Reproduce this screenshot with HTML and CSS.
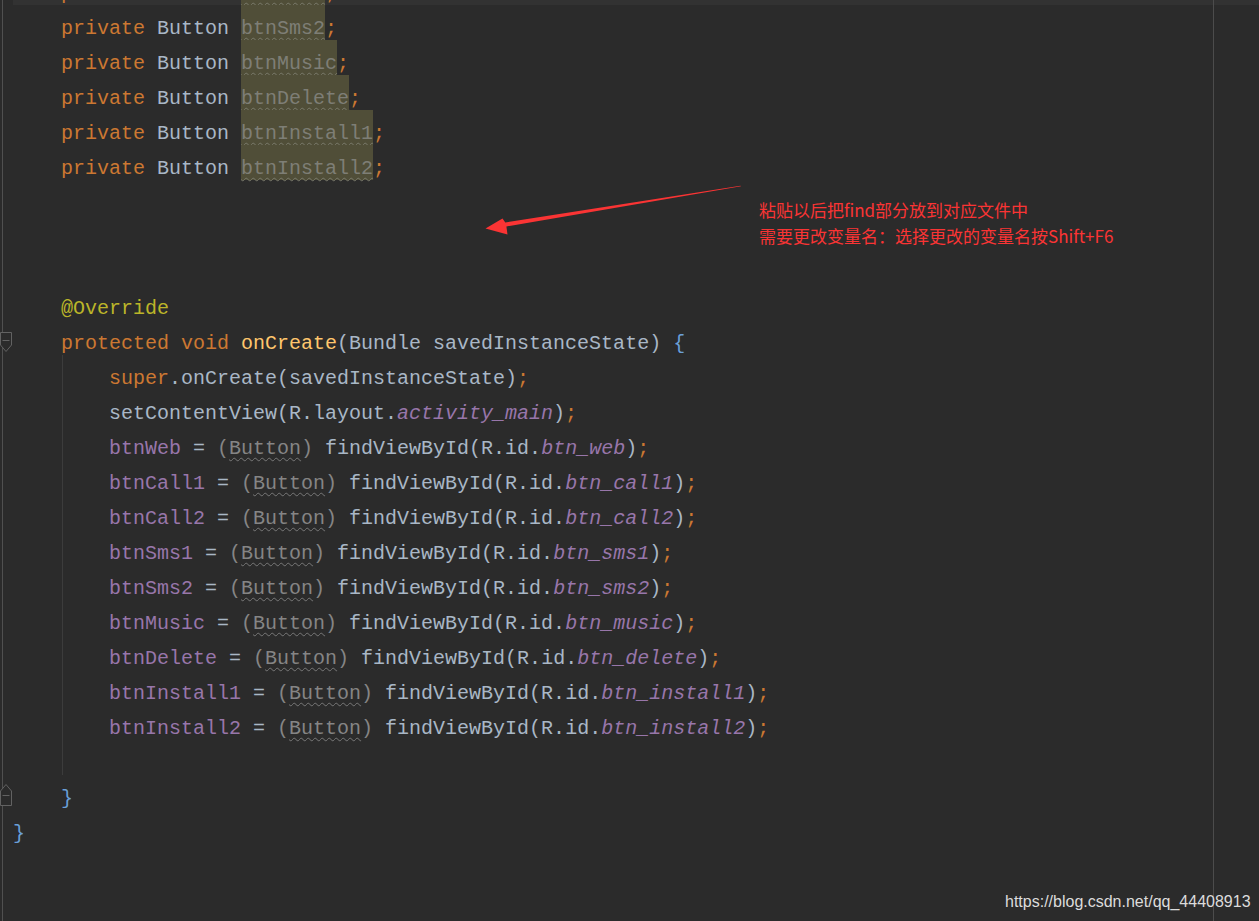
FILE: index.html
```html
<!DOCTYPE html>
<html lang="zh-CN">
<head>
    <meta charset="UTF-8">
    <title>MainActivity.java</title>
    <link rel="stylesheet" href="styles.css">
</head>
<body>
    <div class="editor">
        <div class="gutter">
            <svg class="fold fold-open" width="13" height="21" viewBox="0 0 13 21"><path d="M0.5 0.5 H11.5 V13 L6 19.5 L0.5 13 Z M2.5 8.5 H9.5" fill="#2b2b2b" stroke="#626262"/></svg>
            <svg class="fold fold-close" width="13" height="23" viewBox="0 0 13 23"><path d="M0.5 22.5 H11.5 V8 L6 1.5 L0.5 8 Z M2.5 12.5 H9.5" fill="#2b2b2b" stroke="#626262"/></svg>
        </div>
        <div class="code">
            <div class="line current">    <span class="kw">private</span> Button <span class="hl">btnSms1</span><span class="kw">;</span></div>
            <div class="line">    <span class="kw">private</span> Button <span class="hl">btnSms2</span><span class="kw">;</span></div>
            <div class="line">    <span class="kw">private</span> Button <span class="hl">btnMusic</span><span class="kw">;</span></div>
            <div class="line">    <span class="kw">private</span> Button <span class="hl">btnDelete</span><span class="kw">;</span></div>
            <div class="line">    <span class="kw">private</span> Button <span class="hl">btnInstall1</span><span class="kw">;</span></div>
            <div class="line">    <span class="kw">private</span> Button <span class="hl">btnInstall2</span><span class="kw">;</span></div>
            <div class="line"></div>
            <div class="line"></div>
            <div class="line"></div>
            <div class="line">    <span class="anno">@Override</span></div>
            <div class="line">    <span class="kw">protected void</span> <span class="decl">onCreate</span>(Bundle savedInstanceState) <span class="brace">{</span></div>
            <div class="block">
                <div class="line"><span class="kw">super</span>.onCreate(savedInstanceState)<span class="kw">;</span></div>
                <div class="line">setContentView(R.layout.<span class="static">activity_main</span>)<span class="kw">;</span></div>
                <div class="line"><span class="field">btnWeb</span> = <span class="cast">(<u>Button</u>)</span> findViewById(R.id.<span class="static">btn_web</span>)<span class="kw">;</span></div>
                <div class="line"><span class="field">btnCall1</span> = <span class="cast">(<u>Button</u>)</span> findViewById(R.id.<span class="static">btn_call1</span>)<span class="kw">;</span></div>
                <div class="line"><span class="field">btnCall2</span> = <span class="cast">(<u>Button</u>)</span> findViewById(R.id.<span class="static">btn_call2</span>)<span class="kw">;</span></div>
                <div class="line"><span class="field">btnSms1</span> = <span class="cast">(<u>Button</u>)</span> findViewById(R.id.<span class="static">btn_sms1</span>)<span class="kw">;</span></div>
                <div class="line"><span class="field">btnSms2</span> = <span class="cast">(<u>Button</u>)</span> findViewById(R.id.<span class="static">btn_sms2</span>)<span class="kw">;</span></div>
                <div class="line"><span class="field">btnMusic</span> = <span class="cast">(<u>Button</u>)</span> findViewById(R.id.<span class="static">btn_music</span>)<span class="kw">;</span></div>
                <div class="line"><span class="field">btnDelete</span> = <span class="cast">(<u>Button</u>)</span> findViewById(R.id.<span class="static">btn_delete</span>)<span class="kw">;</span></div>
                <div class="line"><span class="field">btnInstall1</span> = <span class="cast">(<u>Button</u>)</span> findViewById(R.id.<span class="static">btn_install1</span>)<span class="kw">;</span></div>
                <div class="line"><span class="field">btnInstall2</span> = <span class="cast">(<u>Button</u>)</span> findViewById(R.id.<span class="static">btn_install2</span>)<span class="kw">;</span></div>
                <div class="line"></div>
            </div>
            <div class="line">    <span class="brace">}</span></div>
            <div class="line"><span class="brace">}</span></div>
        </div>
        <div class="margin-line"></div>
    </div>

    <!-- screenshot annotation -->
    <svg class="arrow" width="1259" height="300" viewBox="0 0 1259 300">
        <polygon points="741,186.3 506.4,226.4 507.5,234.5 485.5,228.5 502.5,218.5 505.3,222.5 740.5,185.7" fill="#fa3434"/>
    </svg>
    <div class="note">
        <div>粘贴以后把find部分放到对应文件中</div>
        <div>需要更改变量名：选择更改的变量名按Shift+F6</div>
    </div>
    <div class="watermark">https://blog.csdn.net/qq_44408913</div>
</body>
</html>
```
FILE: styles.css
```css
body {
    margin: 0;
    background-color: #2b2b2b;
    overflow: hidden;
}
.editor {
    position: relative;
    display: flex;
    height: 100vh;
    overflow: hidden;
}
.gutter {
    position: relative;
    margin-left: 2px;
    width: 10px;
    border-left: 1px solid #505050;
}
.fold {
    position: absolute;
    left: -3px;
}
.fold-open {
    top: 332px;
}
.fold-close {
    top: 783px;
}
.code {
    flex: 1;
    margin-top: -30px;
    font-family: "Liberation Mono", monospace;
    font-size: 20px;
    color: #a9b7c6;
}
.line {
    box-sizing: border-box;
    height: 35px;
    padding-top: 9px;
    line-height: 29px;
    white-space: pre;
}
.current {
    background-color: #323232;
}
.block {
    margin-left: 49px;
    padding-left: 46px;
    border-left: 1px solid #3c3c3c;
}
.kw {
    color: #cc7832;
}
.anno {
    color: #bbb529;
}
.decl {
    color: #ffc66d;
}
.field {
    color: #9876aa;
}
.static {
    color: #9876aa;
    font-style: italic;
}
.brace {
    color: #6a9fd8;
}
.hl {
    display: inline-block;
    vertical-align: top;
    margin-top: -9px;
    padding-top: 9px;
    height: 26px;
    background-color: #504e38;
    color: #7e7e76;
    text-decoration: underline wavy #79796a;
    text-underline-offset: 3px;
    text-decoration-thickness: 1px;
}
.cast {
    color: #858585;
}
.cast u {
    text-decoration: underline wavy #777;
    text-underline-offset: 3px;
    text-decoration-thickness: 1px;
}
.margin-line {
    position: absolute;
    left: 1213px;
    top: 0;
    bottom: 0;
    width: 1px;
    background-color: #4c4c4c;
}
.arrow {
    position: absolute;
    left: 0;
    top: 0;
}
.note {
    position: absolute;
    left: 759px;
    top: 197px;
    font-family: "Noto Sans CJK SC", sans-serif;
    font-size: 17px;
    line-height: 26px;
    color: #fa3434;
}
.watermark {
    position: absolute;
    left: 1005px;
    top: 893px;
    font-family: "Liberation Sans", Arial, sans-serif;
    font-size: 16px;
    color: #dcdcdc;
}
```
